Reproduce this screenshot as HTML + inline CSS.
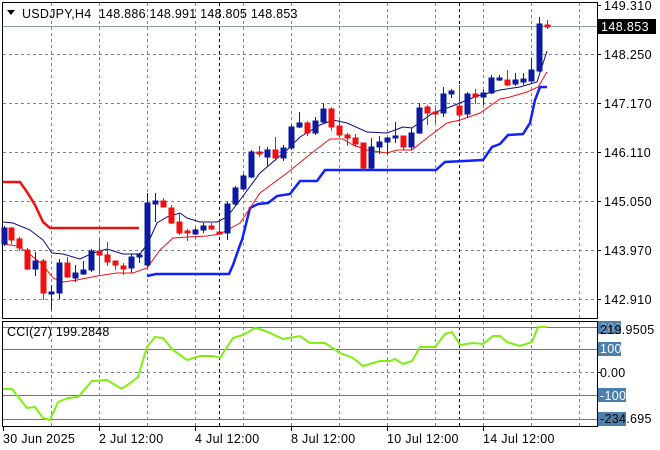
<!DOCTYPE html>
<html><head><meta charset="utf-8"><style>
html,body{margin:0;padding:0;background:#fff;}
svg{display:block;font-family:"Liberation Sans",sans-serif;}
</style></head><body>
<svg width="660" height="450" viewBox="0 0 660 450" xmlns="http://www.w3.org/2000/svg">
<rect width="660" height="450" fill="#fff"/>
<g stroke="#7a8694" stroke-width="1" stroke-dasharray="3,3" fill="none">
<path d="M3 54.5H597M3 103.5H597M3 152.5H597M3 201.5H597M3 250.5H597M3 299.5H597"/>
<path d="M51.5 3V318M99.5 3V318M147.5 3V318M195.5 3V318M243.5 3V318M291.5 3V318M339.5 3V318M387.5 3V318M435.5 3V318M483.5 3V318M531.5 3V318M579.5 3V318"/>
<path d="M51.5 321V426M99.5 321V426M147.5 321V426M195.5 321V426M243.5 321V426M291.5 321V426M339.5 321V426M387.5 321V426M435.5 321V426M483.5 321V426M531.5 321V426M579.5 321V426"/>
<path d="M3 372.5H597"/>
</g>
<g stroke="#000" stroke-dasharray="3,3"><path d="M219.5 3V318M459.5 3V318M219.5 321V426M459.5 321V426"/></g>
<path d="M3 26.5H597" stroke="#8a96a2"/>
<g stroke="#4a7fae"><path d="M3 327.5H597M3 349.5H597M3 395.5H597M3 419.5H597"/></g>
<g stroke="#000" fill="none"><rect x="2.5" y="2.5" width="595" height="316"/><rect x="2.5" y="321.5" width="595" height="105"/></g>
<g stroke="#000"><path d="M597 5.5h4M597 54.5h4M597 103.5h4M597 152.5h4M597 201.5h4M597 250.5h4M597 299.5h4M597 372.5h4"/>
<path d="M3.5 427v4M99.5 427v4M195.5 427v4M291.5 427v4M387.5 427v4M483.5 427v4"/></g>
<polyline fill="none" stroke="#f01010" stroke-width="2.5" points="3,182 20,182 27,192 35,205 43,222 50,228 139,228"/>
<polyline fill="none" stroke="#1020ff" stroke-width="2.5" points="147,276 156,274 229,274 233,265 240,245 242,240 250,208 258,204 268,203 277,196 290,194 300,181 317,181 325,170 436,170 445,162 483,160 492,147 500,144 508,135 523,134 530,123 535,100 540,87 547,87"/>
<polyline fill="none" stroke="#0a0a80" stroke-width="1" points="3,222 13,223 30,230 43,240 52,253 63,254 80,259 93,253 107,249 123,254 140,254 148,243 157,223 167,217 180,213 187,218 200,222 217,222 227,217 240,200 260,173 287,150 300,137 320,125 333,120 347,123 367,132 387,133 403,127 412,128 433,113 450,107 477,96 500,90 520,87 537,82 547,51"/>
<polyline fill="none" stroke="#f01010" stroke-width="1" points="3,244 17,246 27,252 43,265 53,278 63,282 77,280 97,276 117,273 133,273 147,268 160,250 173,238 187,237 207,236 220,234 233,227 240,223 260,193 287,173 313,152 330,139 343,139 353,145 367,150 387,153 397,150 412,150 427,138 447,123 460,120 480,113 500,99 510,97 527,92 538,87 547,72"/>
<g stroke-width="1">
<g stroke="#0b1a9e" fill="#0b1a9e">
<path d="M4.5 226V246M35.5 252V276M51.5 285V310M59.5 259V299M75.5 265V282M83.5 261V275M91.5 249V272M131.5 254V273M139.5 253V263M147.5 193V267M155.5 193V222M195.5 228V235M203.5 223V233M227.5 202V240M235.5 186V206M243.5 174V190M251.5 150V178M267.5 147V166M283.5 145V161M291.5 125V150M299.5 112V128M315.5 117V135M323.5 103V123M371.5 138V169M379.5 136V154M387.5 137V154M395.5 122V143M411.5 128V150M419.5 103V134M443.5 87V117M451.5 89V98M467.5 92V118M483.5 90V105M491.5 75V94M499.5 75V81M515.5 73V86M523.5 73V85M531.5 58V84M539.5 17V72"/>
<rect x="2" y="228" width="5" height="16"/><rect x="33" y="261" width="5" height="8"/><rect x="49" y="292" width="5" height="2"/><rect x="57" y="263" width="5" height="30"/><rect x="73" y="273" width="5" height="5"/><rect x="81" y="270" width="5" height="4"/><rect x="89" y="251" width="5" height="19"/><rect x="129" y="257" width="5" height="11"/><rect x="137" y="255" width="5" height="2"/><rect x="145" y="203" width="5" height="62"/><rect x="153" y="201" width="5" height="3"/><rect x="193" y="230" width="5" height="4"/><rect x="201" y="226" width="5" height="4"/><rect x="225" y="204" width="5" height="29"/><rect x="233" y="188" width="5" height="16"/><rect x="241" y="176" width="5" height="13"/><rect x="249" y="152" width="5" height="25"/><rect x="265" y="150" width="5" height="7"/><rect x="281" y="148" width="5" height="10"/><rect x="289" y="127" width="5" height="21"/><rect x="297" y="123" width="5" height="4"/><rect x="313" y="121" width="5" height="12"/><rect x="321" y="109" width="5" height="13"/><rect x="369" y="147" width="5" height="21"/><rect x="377" y="142" width="5" height="5"/><rect x="385" y="138" width="5" height="4"/><rect x="393" y="136" width="5" height="2"/><rect x="409" y="133" width="5" height="14"/><rect x="417" y="108" width="5" height="25"/><rect x="441" y="94" width="5" height="19"/><rect x="449" y="91" width="5" height="3"/><rect x="465" y="94" width="5" height="20"/><rect x="481" y="93" width="5" height="4"/><rect x="489" y="78" width="5" height="15"/><rect x="497" y="78" width="5" height="2"/><rect x="513" y="80" width="5" height="4"/><rect x="521" y="79" width="5" height="3"/><rect x="529" y="70" width="5" height="11"/><rect x="537" y="24" width="5" height="47"/>
</g>
<g stroke="#f01010" fill="#f01010">
<path d="M11.5 227V244M19.5 237V251M27.5 248V270M43.5 259V300M67.5 257V278M99.5 238V273M107.5 242V266M115.5 261V270M123.5 263V275M163.5 198V207M171.5 205V224M179.5 213V235M187.5 229V241M211.5 223V230M219.5 220V235M259.5 146V157M275.5 137V161M307.5 121V136M331.5 107V131M339.5 120V137M347.5 133V146M355.5 134V147M363.5 143V170M403.5 136V150M427.5 105V125M435.5 108V123M459.5 85V122M475.5 89V104M507.5 70V86M547.5 20V29"/>
<rect x="9" y="228" width="5" height="12"/><rect x="17" y="239" width="5" height="9"/><rect x="25" y="250" width="5" height="19"/><rect x="41" y="261" width="5" height="32"/><rect x="65" y="263" width="5" height="14"/><rect x="97" y="251" width="5" height="4"/><rect x="105" y="255" width="5" height="7"/><rect x="113" y="261" width="5" height="4"/><rect x="121" y="266" width="5" height="3"/><rect x="161" y="201" width="5" height="6"/><rect x="169" y="208" width="5" height="15"/><rect x="177" y="222" width="5" height="11"/><rect x="185" y="231" width="5" height="2"/><rect x="209" y="226" width="5" height="3"/><rect x="217" y="232" width="5" height="2"/><rect x="257" y="152" width="5" height="2"/><rect x="273" y="150" width="5" height="8"/><rect x="305" y="123" width="5" height="10"/><rect x="329" y="109" width="5" height="18"/><rect x="337" y="126" width="5" height="9"/><rect x="345" y="135" width="5" height="3"/><rect x="353" y="138" width="5" height="6"/><rect x="361" y="143" width="5" height="25"/><rect x="401" y="136" width="5" height="11"/><rect x="425" y="107" width="5" height="6"/><rect x="433" y="112" width="5" height="2"/><rect x="457" y="106" width="5" height="9"/><rect x="473" y="94" width="5" height="3"/><rect x="505" y="80" width="5" height="5"/><rect x="545" y="25" width="5" height="2"/>
</g>
</g>
<polyline fill="none" stroke="#80ee10" stroke-width="2" points="3,389 12,389 27,408 35,407 43,418 50,420 58,402 68,398 78,397 92,381 107,380 120,388 123,388 133,381 138,377 147,347 155,337 163,338 173,350 187,360 200,356 213,356 220,358 233,338 243,335 255,328 263,330 283,339 300,336 310,343 325,343 340,353 353,358 363,366 380,361 390,361 395,359 403,364 412,361 420,347 435,347 445,334 452,332 460,345 473,343 483,344 493,336 500,336 507,342 520,346 532,342 538,327 547,327"/>
<path d="M7 10h8l-4 5z" fill="#000"/>
<text x="22" y="18" font-size="12.5" letter-spacing="0.25" fill="#000" xml:space="preserve">USDJPY,H4  148.886 148.991 148.805 148.853</text>
<text x="7" y="336" font-size="12.5" letter-spacing="0.2" fill="#000">CCI(27) 199.2848</text>
<g font-size="12.5" letter-spacing="0.4" fill="#000">
<text x="604" y="10">149.310</text>
<text x="604" y="59">148.250</text>
<text x="604" y="108">147.170</text>
<text x="604" y="157">146.110</text>
<text x="604" y="206">145.050</text>
<text x="604" y="255">143.970</text>
<text x="604" y="304">142.910</text>
</g>
<rect x="598" y="19" width="58" height="15" fill="#000"/>
<text x="601" y="31" font-size="12.5" letter-spacing="0.4" fill="#fff">148.853</text>
<g fill="#4a7fae"><rect x="598" y="321" width="23" height="13"/><rect x="598" y="342" width="23" height="14"/><rect x="598" y="388" width="28" height="14"/><rect x="598" y="412" width="28" height="14"/></g>
<g font-size="12.5" letter-spacing="0.3">
<text x="600" y="332" fill="#9ab">200</text>
<text x="600" y="353" fill="#fff">100</text>
<text x="600" y="377" fill="#000">0.00</text>
<text x="600" y="400" fill="#fff">-100</text>
<text x="600" y="423" fill="#9ab">-234</text>
<text x="600" y="334" fill="#000">219.9505</text>
<text x="600" y="423" fill="#000">-234.695</text>
</g>
<g font-size="12.5" letter-spacing="0.3" fill="#000">
<text x="3" y="443">30 Jun 2025</text>
<text x="99" y="443">2 Jul 12:00</text>
<text x="195" y="443">4 Jul 12:00</text>
<text x="291" y="443">8 Jul 12:00</text>
<text x="387" y="443">10 Jul 12:00</text>
<text x="483" y="443">14 Jul 12:00</text>
</g>
</svg>
</body></html>
